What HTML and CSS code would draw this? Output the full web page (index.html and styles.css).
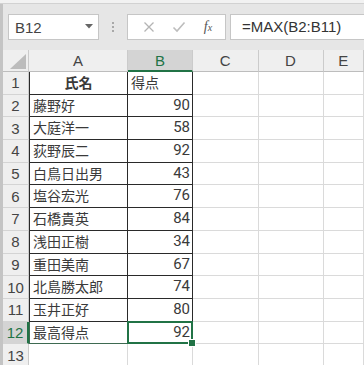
FILE: index.html
```html
<!DOCTYPE html>
<html lang="ja">
<head>
    <meta charset="UTF-8">
    <meta name="viewport" content="width=device-width, initial-scale=1.0">
    <title>得点表</title>
    <link rel="stylesheet" href="styles.css">
</head>
<body>

    <div class="top-strip"></div>

    <div class="window">

        <!-- Formula bar -->
        <div class="formula-bar">
            <div class="name-box">
                <span>B12</span>
                <svg class="drop" width="8" height="5" viewBox="0 0 8 5"><path d="M0 0H8L4 4.5Z" fill="#666"/></svg>
            </div>
            <div class="grip"><i></i><i></i><i></i></div>
            <div class="fx-buttons">
                <svg width="12" height="12" viewBox="0 0 12 12"><path d="M1.5 1.5L10.5 10.5M10.5 1.5L1.5 10.5" stroke="#b4b4b4" stroke-width="1.3"/></svg>
                <svg width="14" height="12" viewBox="0 0 14 12"><path d="M1.5 6.5L5 10L12.5 1.5" stroke="#bdbdbd" stroke-width="1.6" fill="none"/></svg>
                <span class="fx">f<small>x</small></span>
            </div>
            <div class="formula-input">=MAX(B2:B11)</div>
        </div>

        <!-- Sheet -->
        <div class="sheet">
            <div class="corner"><span class="tri"></span></div>
            <div class="col-head">A</div>
            <div class="col-head active">B</div>
            <div class="col-head">C</div>
            <div class="col-head">D</div>
            <div class="col-head">E</div>

            <div class="row-head">1</div>
            <div class="cell tbl a center bold">氏名</div>
            <div class="cell tbl">得点</div>
            <div class="cell"></div><div class="cell"></div><div class="cell"></div>

            <div class="row-head">2</div>
            <div class="cell tbl a">藤野好</div>
            <div class="cell tbl num">90</div>
            <div class="cell"></div><div class="cell"></div><div class="cell"></div>

            <div class="row-head">3</div>
            <div class="cell tbl a">大庭洋一</div>
            <div class="cell tbl num">58</div>
            <div class="cell"></div><div class="cell"></div><div class="cell"></div>

            <div class="row-head">4</div>
            <div class="cell tbl a">荻野辰二</div>
            <div class="cell tbl num">92</div>
            <div class="cell"></div><div class="cell"></div><div class="cell"></div>

            <div class="row-head">5</div>
            <div class="cell tbl a">白鳥日出男</div>
            <div class="cell tbl num">43</div>
            <div class="cell"></div><div class="cell"></div><div class="cell"></div>

            <div class="row-head">6</div>
            <div class="cell tbl a">塩谷宏光</div>
            <div class="cell tbl num">76</div>
            <div class="cell"></div><div class="cell"></div><div class="cell"></div>

            <div class="row-head">7</div>
            <div class="cell tbl a">石橋貴英</div>
            <div class="cell tbl num">84</div>
            <div class="cell"></div><div class="cell"></div><div class="cell"></div>

            <div class="row-head">8</div>
            <div class="cell tbl a">浅田正樹</div>
            <div class="cell tbl num">34</div>
            <div class="cell"></div><div class="cell"></div><div class="cell"></div>

            <div class="row-head">9</div>
            <div class="cell tbl a">重田美南</div>
            <div class="cell tbl num">67</div>
            <div class="cell"></div><div class="cell"></div><div class="cell"></div>

            <div class="row-head">10</div>
            <div class="cell tbl a">北島勝太郎</div>
            <div class="cell tbl num">74</div>
            <div class="cell"></div><div class="cell"></div><div class="cell"></div>

            <div class="row-head">11</div>
            <div class="cell tbl a">玉井正好</div>
            <div class="cell tbl num">80</div>
            <div class="cell"></div><div class="cell"></div><div class="cell"></div>

            <div class="row-head active">12</div>
            <div class="cell tbl a last">最高得点</div>
            <div class="cell tbl num selected">92</div>
            <div class="cell"></div><div class="cell"></div><div class="cell"></div>

            <div class="row-head">13</div>
            <div class="cell"></div>
            <div class="cell"></div>
            <div class="cell"></div><div class="cell"></div><div class="cell"></div>
        </div>

    </div>

</body>
</html>
```

FILE: styles.css
```css
body {
    margin: 0;
    width: 364px;
    height: 365px;
    overflow: hidden;
    background: #e6e6e6;
    font-family: "Liberation Sans", "Noto Sans CJK JP", sans-serif;
    color: #333;
}

.top-strip {
    height: 3px;
    background: #f2f2f2;
    border-bottom: 1px solid #d2d2d2;
}

.window {
    border-left: 3px solid #c4c4c4;
}

/* formula bar */
.formula-bar {
    display: flex;
    align-items: center;
    height: 46px;
    padding-left: 5px;
}

.name-box {
    box-sizing: border-box;
    width: 91px;
    height: 26px;
    background: white;
    border: 1px solid #c6c6c6;
    display: flex;
    align-items: center;
    justify-content: space-between;
    padding: 0 5px 0 6px;
    font-size: 15px;
    color: #444;
}

.name-box .drop {
    margin-top: -2px;
}

.grip {
    width: 28px;
    display: flex;
    flex-direction: column;
    align-items: center;
    gap: 2px;
}

.grip i {
    width: 2px;
    height: 2px;
    background: #a8a8a8;
}

.fx-buttons {
    box-sizing: border-box;
    width: 99px;
    height: 26px;
    background: white;
    border: 1px solid #c6c6c6;
    display: flex;
    align-items: center;
    justify-content: space-around;
    padding: 0 4px 0 6px;
}

.fx {
    font-family: "Liberation Serif", serif;
    font-style: italic;
    font-size: 14px;
    color: #555;
}

.fx small {
    font-size: 10px;
}

.formula-input {
    box-sizing: border-box;
    flex: 1;
    height: 26px;
    margin-left: 4px;
    margin-right: -10px;
    background: white;
    border: 1px solid #c6c6c6;
    padding-left: 11px;
    font-size: 15px;
    line-height: 24px;
    color: #333;
}

/* sheet grid */
.sheet {
    display: grid;
    grid-template-columns: 26px 99px 65px 65.5px 65px 1fr;
    grid-template-rows: 22px;
    grid-auto-rows: 22.7px;
    background: white;
}

.corner,
.col-head,
.row-head {
    box-sizing: border-box;
    background: #efefef;
    border-right: 1px solid #cbcbcb;
    border-bottom: 1px solid #bdbdbd;
    display: flex;
    align-items: center;
    justify-content: center;
    font-size: 15px;
    color: #444;
}

.corner {
    position: relative;
}

.corner .tri {
    position: absolute;
    right: 2px;
    bottom: 2px;
    width: 0;
    height: 0;
    border-left: 16px solid transparent;
    border-bottom: 15px solid #bcbcbc;
}

.col-head.active {
    background: #d4d4d4;
    border-bottom: 2px solid #217346;
    color: #217346;
}

.row-head {
    border-bottom-color: #d4d4d4;
}

.row-head.active {
    background: #d4d4d4;
    border-right: 2px solid #217346;
    color: #217346;
}

.cell {
    box-sizing: border-box;
    border-right: 1px solid #dadada;
    border-bottom: 1px solid #dadada;
    font-family: "Noto Sans CJK JP", sans-serif;
    font-size: 14px;
    line-height: 21px;
    color: #3a3a3a;
    padding: 0 3px;
    white-space: nowrap;
    overflow: hidden;
}

.cell.tbl {
    border-right-color: #2a2a2a;
    border-bottom-color: #2a2a2a;
}

.cell.a {
    border-left: 1px solid #2a2a2a;
}

.cell.last {
    border-left-color: #3e6a51;
    border-bottom-color: #3e6a51;
}

.center {
    text-align: center;
}

.bold {
    font-weight: bold;
}

.num {
    text-align: right;
    font-family: "Roboto", sans-serif;
    font-size: 15px;
    padding-right: 2px;
}

.selected {
    position: relative;
    overflow: visible;
}

.selected::after {
    content: "";
    position: absolute;
    left: -1px;
    top: -1px;
    right: -1px;
    bottom: -1px;
    border: 2px solid #217346;
}

.selected::before {
    content: "";
    position: absolute;
    right: -4px;
    bottom: -4px;
    width: 6px;
    height: 6px;
    background: #217346;
    border: 1px solid white;
    z-index: 1;
}
```
